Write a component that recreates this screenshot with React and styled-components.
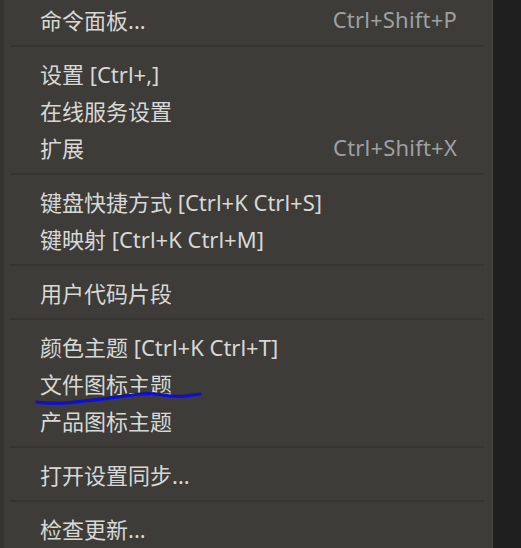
import React from 'react';
import styled, { createGlobalStyle } from 'styled-components';

const GlobalStyle = createGlobalStyle`
  html, body {
    margin: 0;
    padding: 0;
    background: #1e1e1e;
  }
  body {
    font-family: 'Noto Sans', 'Noto Sans CJK SC', sans-serif;
  }
`;

const Page = styled.div`
  position: relative;
  display: flex;
  width: 521px;
  height: 548px;
  overflow: hidden;
  background: #1e1e1e;
`;

const LeftEdge = styled.div`
  width: 4px;
  flex-shrink: 0;
  background: #353430;
`;

const Panel = styled.div`
  width: 488px;
  flex-shrink: 0;
  background: #3d3c38;
  border-right: 1px solid #4a4945;
  display: flex;
  flex-direction: column;
`;

const Gutter = styled.div`
  flex: 1;
  background: #1f1f1f;
`;

const Row = styled.div`
  display: flex;
  align-items: center;
  justify-content: space-between;
  height: 37px;
  padding: 0 35px 0 36px;
  font-size: 22px;
  color: #d8d8d6;
  white-space: nowrap;
`;

const Shortcut = styled.span`
  color: #9ea1a2;
  font-size: 22px;
  letter-spacing: 0.2px;
`;

const Separator = styled.div`
  height: 17px;
  display: flex;
  align-items: center;
  padding: 0 8px 0 6px;
  &::after {
    content: '';
    flex: 1;
    height: 2px;
    background: #353430;
  }
`;

const Scribble = styled.svg`
  position: absolute;
  left: 0;
  top: 0;
  pointer-events: none;
`;

const groups = [
  [{ label: '命令面板...', key: 'Ctrl+Shift+P' }],
  [
    { label: '设置 [Ctrl+,]' },
    { label: '在线服务设置' },
    { label: '扩展', key: 'Ctrl+Shift+X' },
  ],
  [
    { label: '键盘快捷方式 [Ctrl+K Ctrl+S]' },
    { label: '键映射 [Ctrl+K Ctrl+M]' },
  ],
  [{ label: '用户代码片段' }],
  [
    { label: '颜色主题 [Ctrl+K Ctrl+T]' },
    { label: '文件图标主题' },
    { label: '产品图标主题' },
  ],
  [{ label: '打开设置同步...' }],
  [{ label: '检查更新...' }],
];

export default function App() {
  return (
    <Page>
      <GlobalStyle />
      <LeftEdge />
      <Panel>
        {groups.map((items, gi) => (
          <React.Fragment key={gi}>
            {gi > 0 && <Separator />}
            {items.map((item) => (
              <Row key={item.label}>
                <span>{item.label}</span>
                {item.key && <Shortcut>{item.key}</Shortcut>}
              </Row>
            ))}
          </React.Fragment>
        ))}
      </Panel>
      <Gutter />
      <Scribble width="521" height="548" viewBox="0 0 521 548">
        <path
          d="M37 402 C 60 406, 100 399, 140 394 C 160 392, 166 398, 185 396 L 200 394"
          fill="none"
          stroke="#0e0ed4"
          strokeWidth="3.2"
          strokeLinecap="round"
        />
      </Scribble>
    </Page>
  );
}
